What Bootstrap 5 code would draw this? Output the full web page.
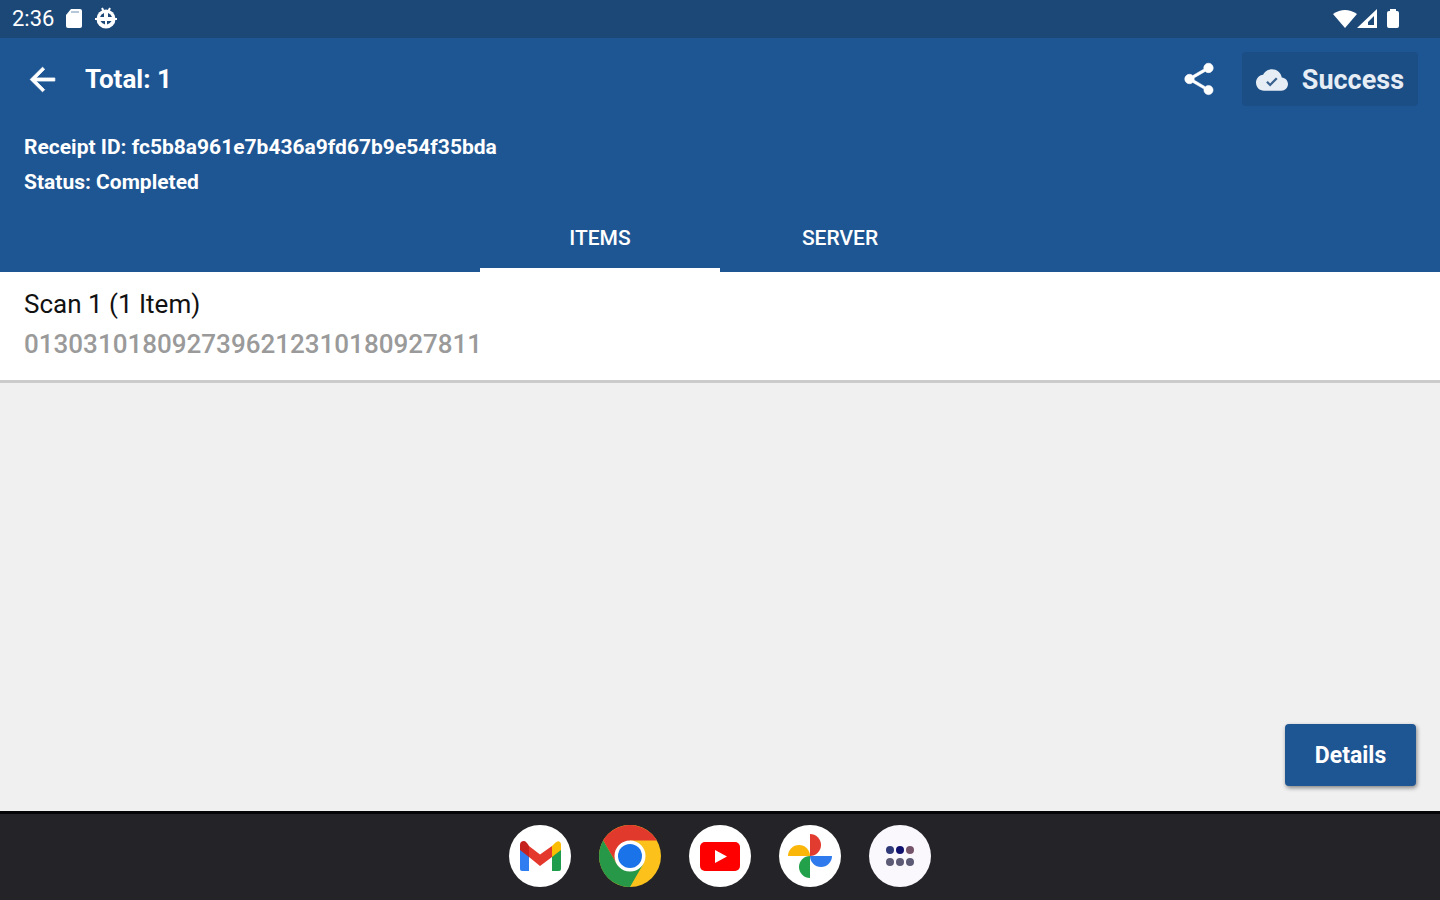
<!DOCTYPE html>
<html lang="en">
<head>
<meta charset="utf-8">
<meta name="viewport" content="width=device-width, initial-scale=1">
<title>Receipt</title>
<link href="https://cdn.jsdelivr.net/npm/bootstrap@5.3.0/dist/css/bootstrap.min.css" rel="stylesheet">
<style>
body { font-family: Roboto, "Liberation Sans", sans-serif; background: #f0f0f0; }
svg { display: block; flex: none; }
.statusbar { height: 38px; background: #1c4878; padding: 0 39px 0 12px; font-size: 22px; line-height: 40px; }
.app-header { background: #1e5593; }
.toolbar { height: 82px; padding: 0 22px 0 24px; }
.title { font-size: 26px; line-height: 32px; font-weight: 700; margin-left: 24px; }
.icon-btn { border: 0; background: none; padding: 0; color: inherit; }
.sync { background: #1b4e85; border-radius: 4px; height: 54px; padding: 2px 14px 0; gap: 14px; font-size: 27px; font-weight: 700; color: #e6edf5; margin-left: 24px; }
.meta { padding: 10px 24px 0; font-size: 21px; line-height: 35px; font-weight: 700; }
.tab-link { width: 240px; height: 72px; border: 0; border-bottom: 4px solid transparent; background: none; color: #fff; font-size: 21px; line-height: 32px; font-weight: 500; padding: 8px 0 0; }
.tab-link.active { border-bottom-color: #fff; }
.scan { background: #fff; border-bottom: 3px solid #cbcbcb; padding: 12px 24px 16px; line-height: 40px; font-size: 26px; }
.scan-title { color: #111; }
.scan-code { color: #9a9a9a; font-weight: 500; }
.details { background: #1e5593; color: #fff; border: 0; border-radius: 4px; width: 131px; height: 62px; padding: 2px 0 0; font-size: 23px; font-weight: 700; box-shadow: 1px 2px 4px rgba(0,0,0,.45); margin: 0 24px 25px; }
.dock { background: #242428; border-top: 3px solid #050507; height: 89px; gap: 28px; padding-bottom: 3px; }
</style>
</head>
<body class="d-flex flex-column min-vh-100">
<div class="statusbar d-flex align-items-center text-white">
  <span>2:36</span>
  <svg class="ms-2" width="24" height="24" viewBox="0 0 24 24" fill="#fff"><path d="M9 2h9q2 0 2 2v15q0 2-2 2H6q-2 0-2-2V8z"/><path d="M9 5h8" stroke="#9eb4cd" stroke-width="1.500"/></svg>
  <svg class="ms-2" width="24" height="24" viewBox="0 0 24 24"><path d="M8 1l2 4M16 1l-2 4M1 12h22" stroke="#fff" stroke-width="2"/><circle cx="12" cy="12" r="9.500" fill="#fff"/><path d="M6 10q1-3 4-4v4zM18 10q-1-3-4-4v4zM6.500 14H11v3.500Q8 17 6.500 14zM17.500 14H13v3.500q3-.5 4.500-3.500z" fill="#1c4878"/></svg>
  <svg class="ms-auto" width="24" height="24" viewBox="0 0 24 24" fill="#fff"><path d="M0 7q12-8 24 0L12 21z"/></svg>
  <svg width="20" height="24" viewBox="0 0 20 24"><path fill="#fff" fill-rule="evenodd" d="M20 2v19H0zM17 9l-6 6v3h6z"/></svg>
  <svg class="ms-2" width="16" height="24" viewBox="0 0 16 24" fill="#fff"><path d="M5 2h6v2h1q2 0 2 2v13q0 2-2 2H4q-2 0-2-2V6q0-2 2-2h1z"/></svg>
</div>
<header class="app-header text-white">
  <div class="toolbar d-flex align-items-center">
    <button class="icon-btn" aria-label="Back"><svg width="37" height="37" viewBox="0 0 24 24" fill="#fff" stroke="#fff" stroke-width=".5"><path d="M20 11H7.830l5.590-5.590L12 4l-8 8 8 8 1.410-1.410L7.830 13H20z"/></svg></button>
    <h1 class="title mb-0">Total: 1</h1>
    <button class="icon-btn ms-auto" aria-label="Share"><svg width="38" height="38" viewBox="0 0 24 24" fill="#fff" stroke="#fff" stroke-width=".3"><path d="M18 16.08c-.76 0-1.44.3-1.96.77L8.91 12.7c.05-.23.09-.46.09-.7s-.04-.47-.09-.7l7.05-4.11c.54.5 1.25.81 2.04.81 1.66 0 3-1.34 3-3s-1.34-3-3-3-3 1.34-3 3c0 .24.04.47.09.7L8.04 9.81C7.5 9.31 6.79 9 6 9c-1.66 0-3 1.34-3 3s1.34 3 3 3c.79 0 1.5-.31 2.04-.81l7.12 4.16c-.05.21-.08.43-.08.65 0 1.61 1.31 2.92 2.92 2.92s2.92-1.31 2.92-2.92-1.31-2.92-2.92-2.92z"/></svg></button>
    <button class="icon-btn sync d-flex align-items-center"><svg width="32" height="32" viewBox="0 0 24 24" fill="#e6edf5"><path d="M19.35 10.04C18.67 6.59 15.64 4 12 4 9.11 4 6.6 5.64 5.35 8.04 2.34 8.36 0 10.91 0 14c0 3.31 2.69 6 6 6h13c2.76 0 5-2.24 5-5 0-2.64-2.05-4.78-4.65-4.96z"/><path d="M8.2 13.3l2.4 2.4 5-5" fill="none" stroke="#38618f" stroke-width="1.7"/></svg><span>Success</span></button>
  </div>
  <div class="meta">
    <div>Receipt ID: fc5b8a961e7b436a9fd67b9e54f35bda</div>
    <div>Status: Completed</div>
  </div>
  <div class="d-flex justify-content-center" role="tablist">
    <button class="tab-link active" role="tab" aria-selected="true">ITEMS</button>
    <button class="tab-link" role="tab" aria-selected="false">SERVER</button>
  </div>
</header>
<main class="flex-grow-1 d-flex flex-column">
  <div class="scan">
    <div class="scan-title">Scan 1 (1 Item)</div>
    <div class="scan-code">0130310180927396212310180927811</div>
  </div>
  <button class="details mt-auto align-self-end">Details</button>
</main>
<nav class="dock d-flex justify-content-center align-items-center" aria-label="Apps">
  <button class="icon-btn" aria-label="Gmail"><svg width="62" height="62" viewBox="0 0 62 62"><circle cx="31" cy="31" r="31" fill="#fff"/><path fill="#2f7df0" d="M11 20l9 6v20h-7q-2 0-2-2z"/><path fill="#1f9d4d" d="M43 26l9-6v24q0 2-2 2h-7z"/><path fill="#fbbc04" d="M43 21l3-3q3-3 5-1 1 1 1 3v5l-9 7z"/><path fill="#e5382c" d="M20 21l11 8.500 12-8.500v11l-12 9-11-9z"/><path fill="#c5221f" d="M11 25v-5q0-4 4-4 2 0 5 5v11z"/></svg></button>
  <button class="icon-btn" aria-label="Chrome"><svg width="62" height="62" viewBox="0 0 62 62"><circle cx="31" cy="31" r="31" fill="#fcc21b"/><path fill="#e13a2d" d="M4.200 15.500A31 31 0 0 1 57.800 15.500H31L17.600 38.700z"/><path fill="#279847" d="M4.200 15.500A31 31 0 0 0 31 62L44.400 38.700 31 46 17.600 38.700z"/><circle cx="31" cy="31" r="15.500" fill="#fff"/><circle cx="31" cy="31" r="12" fill="#1a73e8"/></svg></button>
  <button class="icon-btn" aria-label="YouTube"><svg width="62" height="62" viewBox="0 0 62 62"><circle cx="31" cy="31" r="31" fill="#fff"/><rect x="11" y="17" width="40" height="29" rx="5" fill="#f00"/><path fill="#fff" d="M26 25l12 6.500L26 38z"/></svg></button>
  <button class="icon-btn" aria-label="Photos"><svg width="62" height="62" viewBox="0 0 62 62"><circle cx="31" cy="31" r="31" fill="#fff"/><path fill="#e23b30" d="M31 9a11 11 0 0 1 0 22z"/><path fill="#2f7bed" d="M53 31a11 11 0 0 1-22 0z"/><path fill="#22a14a" d="M31 53a11 11 0 0 1 0-22z"/><path fill="#fbb60a" d="M9 31a11 11 0 0 1 22 0z"/></svg></button>
  <button class="icon-btn" aria-label="All apps"><svg width="62" height="62" viewBox="0 0 62 62"><circle cx="31" cy="31" r="31" fill="#faf7fd"/><g fill="#5c5a74"><circle cx="21" cy="25" r="4" fill="#303a78"/><circle cx="31" cy="25" r="4" fill="#10106e"/><circle cx="41" cy="25" r="4" fill="#75546b"/><circle cx="21" cy="37" r="4"/><circle cx="31" cy="37" r="4"/><circle cx="41" cy="37" r="4"/></g></svg></button>
</nav>
<script src="https://cdn.jsdelivr.net/npm/bootstrap@5.3.0/dist/js/bootstrap.bundle.min.js"></script>
</body>
</html>
